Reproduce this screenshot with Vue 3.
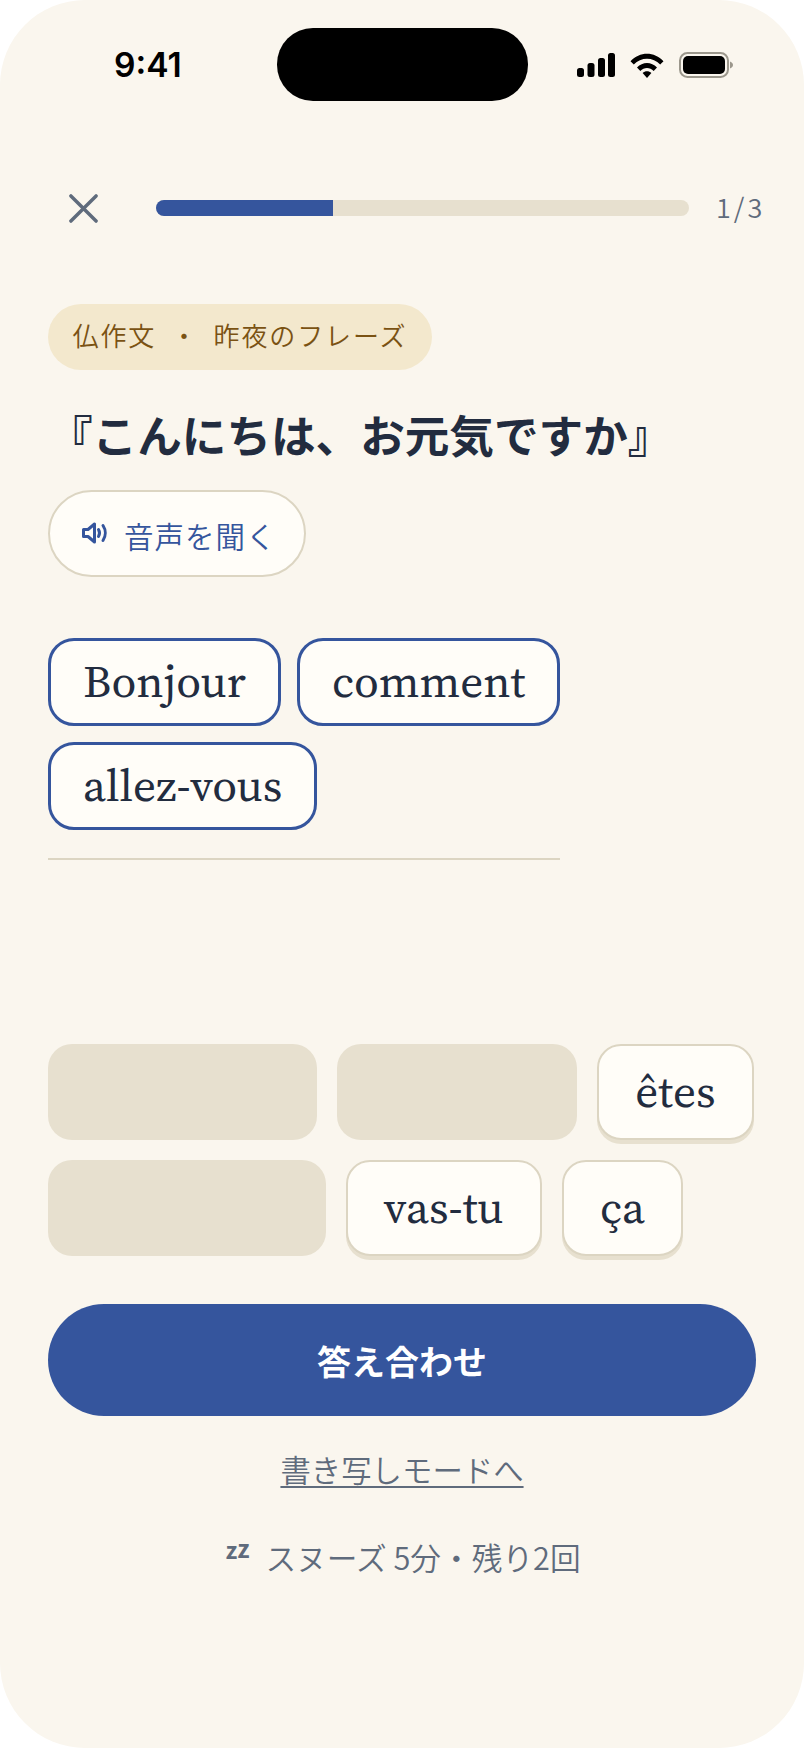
<script setup>
const tokens = ['Bonjour', 'comment', 'allez-vous']
const tiles = [
  { id: 1, w: 269 },
  { id: 2, w: 240 },
  { id: 3, w: 157, text: 'êtes' },
  { id: 4, w: 277.5 },
  { id: 5, w: 196.5, text: 'vas-tu' },
  { id: 6, w: 121, text: 'ça' },
]
</script>

<template>
  <div class="screen">
    <header class="status">
      <span class="time">9:41</span>
      <div class="island"></div>
      <div class="status-icons">
        <svg class="signal" width="38" height="24" viewBox="0 0 38 24">
          <rect x="0" y="15" width="7" height="9" rx="2.5" />
          <rect x="10.5" y="10" width="7" height="14" rx="2.5" />
          <rect x="21" y="5" width="7" height="19" rx="2.5" />
          <rect x="31" y="0" width="7" height="24" rx="2.5" />
        </svg>
        <svg class="wifi" width="34" height="25" viewBox="0 0 34 25">
          <path d="M0.5 8.2C9.5 -1.8 24.5 -1.8 33.5 8.2L30.2 11.6C23 3.8 11 3.8 3.8 11.6Z" />
          <path d="M7 14.6C12.6 8.6 21.4 8.6 27 14.6L23.7 18C20 14.1 14 14.1 10.3 18Z" />
          <path d="M12.6 20C15 17.6 19 17.6 21.4 20L17 25Z" />
        </svg>
        <svg class="battery" width="54" height="26" viewBox="0 0 54 26">
          <rect x="1" y="1" width="48" height="24" rx="7.5" fill="none" stroke="#9b978c" stroke-width="2" />
          <rect x="4" y="4" width="42" height="18" rx="5" fill="#000" />
          <path d="M51 9.5C53 10.2 54 11.5 54 13S53 15.8 51 16.5Z" fill="#9b978c" />
        </svg>
      </div>
    </header>

    <div class="topbar">
      <svg class="close" width="30" height="30" viewBox="0 0 30 30">
        <path d="M2 2L28 28M28 2L2 28" />
      </svg>
      <div class="track"><div class="fill"></div></div>
      <span class="count">1/3</span>
    </div>

    <div class="chip">仏作文 ・ 昨夜のフレーズ</div>
    <h1 class="title">『こんにちは、お元気ですか』</h1>

    <button class="audio">
      <svg width="26" height="22" viewBox="0 0 26 22">
        <path class="spk" d="M1.5 7.5H6L12.5 2V20L6 14.5H1.5Z" />
        <path class="wave" d="M16.5 7.5C17.7 9.6 17.7 12.4 16.5 14.5" />
        <path class="wave" d="M21 3.5C24 8 24 14 21 18.5" />
      </svg>
      <span>音声を聞く</span>
    </button>

    <div class="answer">
      <span v-for="t in tokens" :key="t" class="token">{{ t }}</span>
    </div>
    <div class="answer-line"></div>

    <div class="tiles">
      <template v-for="t in tiles" :key="t.id">
        <span v-if="t.text" class="tile" :style="{ width: t.w + 'px' }">{{ t.text }}</span>
        <span v-else class="slot" :style="{ width: t.w + 'px' }"></span>
      </template>
    </div>

    <button class="cta">答え合わせ</button>
    <a class="link">書き写しモードへ</a>
    <div class="snooze">
      <span class="zz"><span class="z1">z</span><span class="z2">z</span></span>
      <span>スヌーズ 5分・残り2回</span>
    </div>
  </div>
</template>

<style scoped>
.screen {
  width: 804px;
  height: 1748px;
  box-sizing: border-box;
  padding: 0 48px;
  background: #faf6ee;
  border-radius: 85px;
  overflow: hidden;
  font-family: "Noto Sans CJK JP", "Noto Sans", sans-serif;
  display: flex;
  flex-direction: column;
  align-items: flex-start;
}
.status {
  position: relative;
  height: 180px;
  width: 100%;
  flex: none;
}
.time {
  position: absolute;
  left: 66px;
  top: 45px;
  font: 600 33.6px/40px Inter, "Liberation Sans", sans-serif;
  color: #000;
}
.island {
  position: absolute;
  left: 229px;
  top: 28px;
  width: 251px;
  height: 73px;
  border-radius: 36px;
  background: #000;
}
.status-icons {
  position: absolute;
  left: 529px;
  top: 52px;
  display: flex;
  align-items: center;
  gap: 15px;
}
.signal, .wifi { fill: #000; }
.topbar {
  width: 100%;
  height: 56px;
  flex: none;
  display: flex;
  align-items: center;
}
.close {
  margin-left: 21px;
  flex: none;
  width: 29px;
  height: 29px;
}
.close path {
  stroke: #5f6b7c;
  stroke-width: 3.6;
  fill: none;
  stroke-linecap: round;
}
.track {
  margin-left: 58px;
  width: 533px;
  height: 16px;
  border-radius: 8px;
  background: #e7e0cf;
  overflow: hidden;
  flex: none;
}
.fill {
  width: 33.3%;
  height: 100%;
  background: #35559d;
}
.count {
  margin-left: 27px;
  font-size: 27px;
  font-weight: 350;
  letter-spacing: 3px;
  color: #5f6b7c;
  line-height: 1;
  padding-bottom: 3px;
}
.chip {
  margin-top: 68px;
  height: 66px;
  box-sizing: border-box;
  padding: 0 24.5px 6px;
  border-radius: 33px;
  background: #f3e8cd;
  color: #7a5213;
  font-size: 26px;
  font-weight: 350;
  letter-spacing: 1.9px;
  word-spacing: 7px;
  display: flex;
  align-items: center;
}
.title {
  margin: 31px 0 4px;
  font-size: 44.6px;
  line-height: 66px;
  font-weight: 700;
  color: #222c3f;
  white-space: nowrap;
}
.audio {
  margin-top: 19px;
  height: 87px;
  width: 258px;
  box-sizing: border-box;
  padding: 2px 0 0 32px;
  border: 2px solid #dcd5c2;
  border-radius: 44px;
  background: #fffdf8;
  color: #35559d;
  font: inherit;
  font-size: 29.5px;
  font-weight: 350;
  letter-spacing: 1px;
  display: flex;
  align-items: center;
  gap: 16px;
}
.audio svg {
  margin-top: -4px;
}
.spk {
  fill: none;
  stroke: #35559d;
  stroke-width: 3;
  stroke-linejoin: round;
}
.wave {
  fill: none;
  stroke: #35559d;
  stroke-width: 3;
  stroke-linecap: round;
}
.answer {
  margin-top: 61px;
  width: 540px;
  display: flex;
  flex-wrap: wrap;
  gap: 16px;
}
.answer-line {
  margin-top: 28px;
  width: 512px;
  height: 2px;
  flex: none;
  background: #dcd5c2;
}
.token {
  height: 88px;
  box-sizing: border-box;
  padding: 0 32px 1px;
  border: 3px solid #35559d;
  border-radius: 26px;
  background: #fffdf8;
  color: #222c3f;
  font: 450 45.2px/1 "Source Serif 4", "Source Serif Pro", "Noto Serif CJK JP", "Noto Serif", "Liberation Serif", serif;
  display: flex;
  align-items: center;
}
.tiles {
  margin-top: 184px;
  width: 100%;
  display: flex;
  flex-wrap: wrap;
  gap: 20px;
}
.slot {
  height: 96px;
  border-radius: 24px;
  background: #e7e0cf;
}
.tile {
  height: 96px;
  box-sizing: border-box;
  padding-bottom: 1px;
  border: 2px solid #dcd5c2;
  border-radius: 24px;
  background: #fffdf8;
  box-shadow: 0 4px 0 #e7e0cf;
  color: #222c3f;
  font: 450 45.2px/1 "Source Serif 4", "Source Serif Pro", "Noto Serif CJK JP", "Noto Serif", "Liberation Serif", serif;
  display: flex;
  align-items: center;
  justify-content: center;
}
.cta {
  margin-top: 48px;
  width: 708px;
  height: 112px;
  flex: none;
  border: 0;
  border-radius: 56px;
  background: #35559d;
  color: #fff;
  font: inherit;
  font-size: 34px;
  font-weight: 700;
  display: flex;
  align-items: center;
  justify-content: center;
}
.link {
  align-self: center;
  margin-top: 31px;
  font-size: 30.4px;
  font-weight: 350;
  line-height: 44px;
  color: #5f6b7c;
  text-decoration: underline;
  text-underline-offset: 4px;
  text-decoration-thickness: 2px;
}
.snooze {
  align-self: center;
  margin: 44px 0 0 1px;
  display: flex;
  align-items: center;
  gap: 17px;
  font-size: 30.7px;
  font-weight: 350;
  line-height: 44px;
  color: #5f6b7c;
}
.zz {
  display: flex;
  align-items: flex-start;
  font-size: 23px;
  font-weight: 700;
  line-height: 23px;
  transform: translate(1px, -8px);
}
.z2 {
  font-size: 24px;
  transform: translateY(-2px);
}
</style>

<style>
html, body { margin: 0; background: #fff; }
</style>
